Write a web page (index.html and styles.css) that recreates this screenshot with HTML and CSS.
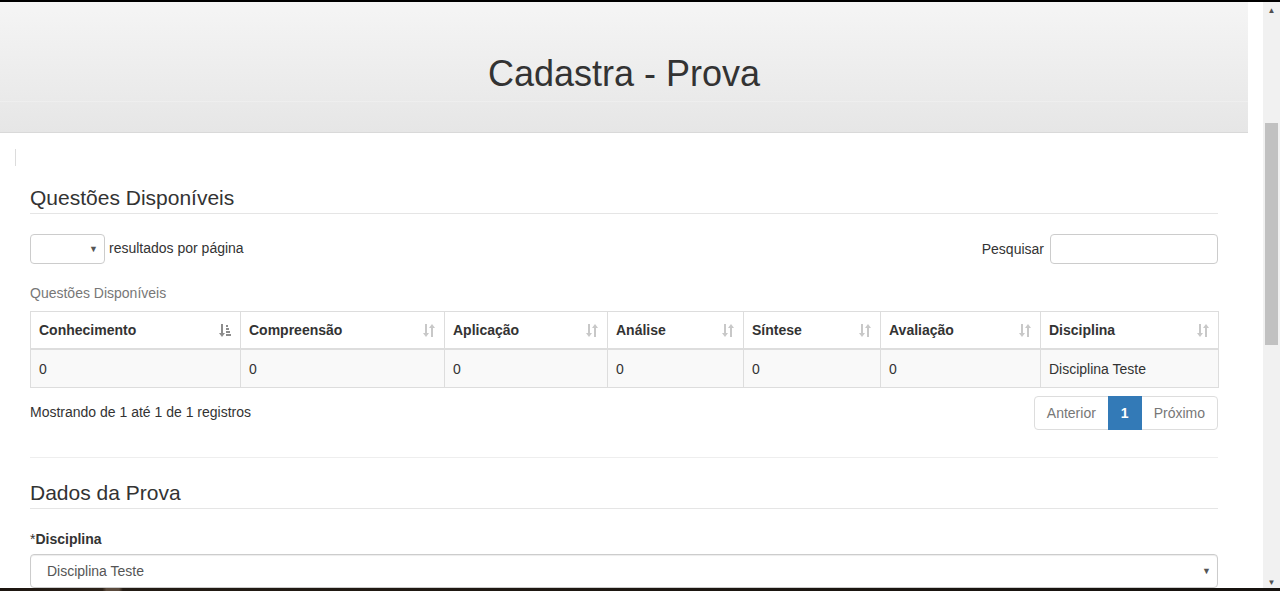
FILE: index.html
```html
<!DOCTYPE html>
<html lang="pt">
<head>
<meta charset="utf-8">
<title>Cadastra - Prova</title>
<link rel="stylesheet" href="styles.css">
</head>
<body>
<div class="topline"></div>
<div class="window">
  <div class="page">
    <header class="jumbo">
      <h1 class="title">Cadastra - Prova</h1>
    </header>
    <div class="stub"></div>
    <div class="container">
      <div class="legend">Questões Disponíveis</div>

      <div class="dt-top">
        <div class="length">
          <div class="sel-sm"><span class="caret">▼</span></div>
          <span class="length-text">resultados por página</span>
        </div>
        <div class="search">
          <span>Pesquisar</span>
          <div class="input"></div>
        </div>
      </div>

      <table class="grid">
        <caption>Questões Disponíveis</caption>
        <colgroup>
          <col class="c1"><col class="c2"><col class="c3"><col class="c4"><col class="c5"><col class="c6"><col class="c7">
        </colgroup>
        <thead>
          <tr>
            <th><div class="th-in"><span>Conhecimento</span>
              <svg class="sort active" width="12" height="13" viewBox="0 0 12 13"><path d="M2 0h2v9h2l-3 4-3-4h2z" fill="currentColor"/><rect x="7" y="1" width="2" height="2" fill="currentColor"/><rect x="7" y="4" width="3" height="2" fill="currentColor"/><rect x="7" y="7" width="4" height="2" fill="currentColor"/><rect x="7" y="10" width="5" height="2" fill="currentColor"/></svg></div></th>
            <th><div class="th-in"><span>Compreensão</span>
              <svg class="sort" width="12" height="13" viewBox="0 0 12 13"><path d="M2 0h2v9h2l-3 4-3-4h2zM8 13h2V4h2L9 0 6 4h2z" fill="currentColor"/></svg></div></th>
            <th><div class="th-in"><span>Aplicação</span>
              <svg class="sort" width="12" height="13" viewBox="0 0 12 13"><path d="M2 0h2v9h2l-3 4-3-4h2zM8 13h2V4h2L9 0 6 4h2z" fill="currentColor"/></svg></div></th>
            <th><div class="th-in"><span>Análise</span>
              <svg class="sort" width="12" height="13" viewBox="0 0 12 13"><path d="M2 0h2v9h2l-3 4-3-4h2zM8 13h2V4h2L9 0 6 4h2z" fill="currentColor"/></svg></div></th>
            <th><div class="th-in"><span>Síntese</span>
              <svg class="sort" width="12" height="13" viewBox="0 0 12 13"><path d="M2 0h2v9h2l-3 4-3-4h2zM8 13h2V4h2L9 0 6 4h2z" fill="currentColor"/></svg></div></th>
            <th><div class="th-in"><span>Avaliação</span>
              <svg class="sort" width="12" height="13" viewBox="0 0 12 13"><path d="M2 0h2v9h2l-3 4-3-4h2zM8 13h2V4h2L9 0 6 4h2z" fill="currentColor"/></svg></div></th>
            <th><div class="th-in"><span>Disciplina</span>
              <svg class="sort" width="12" height="13" viewBox="0 0 12 13"><path d="M2 0h2v9h2l-3 4-3-4h2zM8 13h2V4h2L9 0 6 4h2z" fill="currentColor"/></svg></div></th>
          </tr>
        </thead>
        <tbody>
          <tr>
            <td>0</td><td>0</td><td>0</td><td>0</td><td>0</td><td>0</td><td>Disciplina Teste</td>
          </tr>
        </tbody>
      </table>

      <div class="dt-bottom">
        <div class="info">Mostrando de 1 até 1 de 1 registros</div>
        <ul class="pagination">
          <li class="disabled">Anterior</li>
          <li class="active">1</li>
          <li class="disabled">Próximo</li>
        </ul>
      </div>

      <hr class="sep">

      <div class="legend legend2">Dados da Prova</div>
      <label class="lbl"><span class="req">*</span>Disciplina</label>
      <div class="sel-lg"><span>Disciplina Teste</span><span class="caret">▼</span></div>
    </div>
  </div>
  <div class="scrollbar">
    <div class="sb-arrow">▲</div>
    <div class="sb-track"><div class="sb-thumb"></div></div>
    <div class="sb-arrow">▼</div>
  </div>
</div>
<div class="taskbar"></div>
</body>
</html>
```

FILE: styles.css
```css
* { box-sizing: border-box; }
html, body {
  margin: 0;
  padding: 0;
  height: 591px;
  overflow: hidden;
  background: #fff;
  font-family: "Liberation Sans", Arial, Helvetica, sans-serif;
  font-size: 14px;
  line-height: 20px;
  color: #333;
}
.topline {
  height: 2px;
  background: #000;
}
.window {
  display: flex;
  height: 589px;
}
.page {
  width: 1263px;
  flex: none;
}
.jumbo {
  width: 1248px;
  height: 131px;
  border-bottom: 1px solid #d9d9d9;
  background:
    linear-gradient(to bottom, transparent 99px, rgba(255,255,255,0.22) 99px, rgba(255,255,255,0.22) 100px, transparent 100px),
    linear-gradient(to bottom, #f5f5f5 0, #e6e6e6 100%);
  display: flex;
  align-items: center;
  justify-content: center;
}
.title {
  margin: 0;
  font-size: 36px;
  font-weight: normal;
  line-height: 40px;
  color: #333;
  padding-top: 13px;
}
.stub {
  margin: 16px 0 0 15px;
  height: 17px;
  border-left: 1px solid #dcdcdc;
}
.container {
  width: 1248px;
  padding: 0 30px;
}
.legend {
  margin-top: 17px;
  font-size: 21px;
  line-height: 30px;
  height: 31px;
  border-bottom: 1px solid #e5e5e5;
  color: #333;
  margin-bottom: 20px;
}
.dt-top {
  display: flex;
  justify-content: space-between;
  align-items: center;
  height: 30px;
}
.length {
  display: flex;
  align-items: center;
  gap: 4px;
}
.length-text {
  position: relative;
  top: -1px;
}
.sel-sm {
  width: 75px;
  height: 30px;
  border: 1px solid #ccc;
  border-radius: 4px;
  display: flex;
  align-items: center;
  justify-content: flex-end;
  padding-right: 6px;
}
.caret {
  font-size: 9px;
  color: #555;
  line-height: 9px;
}
.search {
  display: flex;
  align-items: center;
  gap: 6px;
}
.input {
  width: 168px;
  height: 30px;
  border: 1px solid #ccc;
  border-radius: 4px;
}
.grid {
  width: 1188px;
  table-layout: fixed;
  border-collapse: collapse;
  margin-top: 11px;
}
.grid caption {
  text-align: left;
  color: #777;
  padding: 8px 0;
  line-height: 20px;
}
col.c1 { width: 210px; }
col.c2 { width: 204px; }
col.c3 { width: 163px; }
col.c4 { width: 136px; }
col.c5 { width: 137px; }
col.c6 { width: 160px; }
col.c7 { width: 178px; }
.grid th, .grid td {
  border: 1px solid #ddd;
  padding: 8px 8px;
  line-height: 20px;
  text-align: left;
  vertical-align: middle;
}
.grid td {
  padding-top: 9px;
}
.grid th {
  border-bottom: 2px solid #ddd;
  font-weight: bold;
}
.grid tbody tr {
  background: #f9f9f9;
}
.th-in {
  display: flex;
  justify-content: space-between;
  align-items: center;
}
.sort {
  color: #c8c8c8;
  flex: none;
  margin-right: 1px;
}
.sort.active {
  color: #8c8c8c;
}
.dt-bottom {
  display: flex;
  justify-content: space-between;
  align-items: flex-start;
  margin-top: 8px;
}
.info {
  padding-top: 6px;
}
.pagination {
  display: flex;
  list-style: none;
  margin: 0;
  padding: 0;
}
.pagination li {
  padding: 6px 12px;
  line-height: 20px;
  border: 1px solid #ddd;
  margin-left: -1px;
  color: #777;
  background: #fff;
}
.pagination li:first-child {
  border-radius: 4px 0 0 4px;
  margin-left: 0;
}
.pagination li:last-child {
  border-radius: 0 4px 4px 0;
}
.pagination li.active {
  background: #337ab7;
  border-color: #337ab7;
  color: #fff;
  font-weight: bold;
  position: relative;
}
.sep {
  margin: 27px 0 0;
  border: 0;
  border-top: 1px solid #eee;
}
.legend2 {
  margin-top: 20px;
}
.lbl {
  display: block;
  font-weight: bold;
  margin-bottom: 5px;
  line-height: 20px;
}
.req {
  font-weight: normal;
}
.sel-lg {
  height: 34px;
  border: 1px solid #ccc;
  border-radius: 4px;
  box-shadow: inset 0 1px 1px rgba(0,0,0,0.075);
  display: flex;
  align-items: center;
  justify-content: space-between;
  padding: 0 6px 0 16px;
  color: #555;
}
.scrollbar {
  width: 17px;
  flex: none;
  background: #f1f1f1;
  display: flex;
  flex-direction: column;
  height: 589px;
}
.sb-arrow {
  height: 17px;
  font-size: 8px;
  line-height: 17px;
  text-align: center;
  color: #505050;
}
.sb-track {
  flex: 1;
  padding-top: 104px;
}
.sb-thumb {
  margin-left: 2px;
  width: 13px;
  height: 222px;
  background: #c1c1c1;
}
.taskbar {
  position: fixed;
  left: 0;
  right: 0;
  bottom: 0;
  height: 3px;
  background: linear-gradient(to right, #1c1510 0, #2b2118 8%, #5a4a3c 8.3%, #5a4a3c 9.3%, #231b14 9.6%, #16120e 100%);
}
```
